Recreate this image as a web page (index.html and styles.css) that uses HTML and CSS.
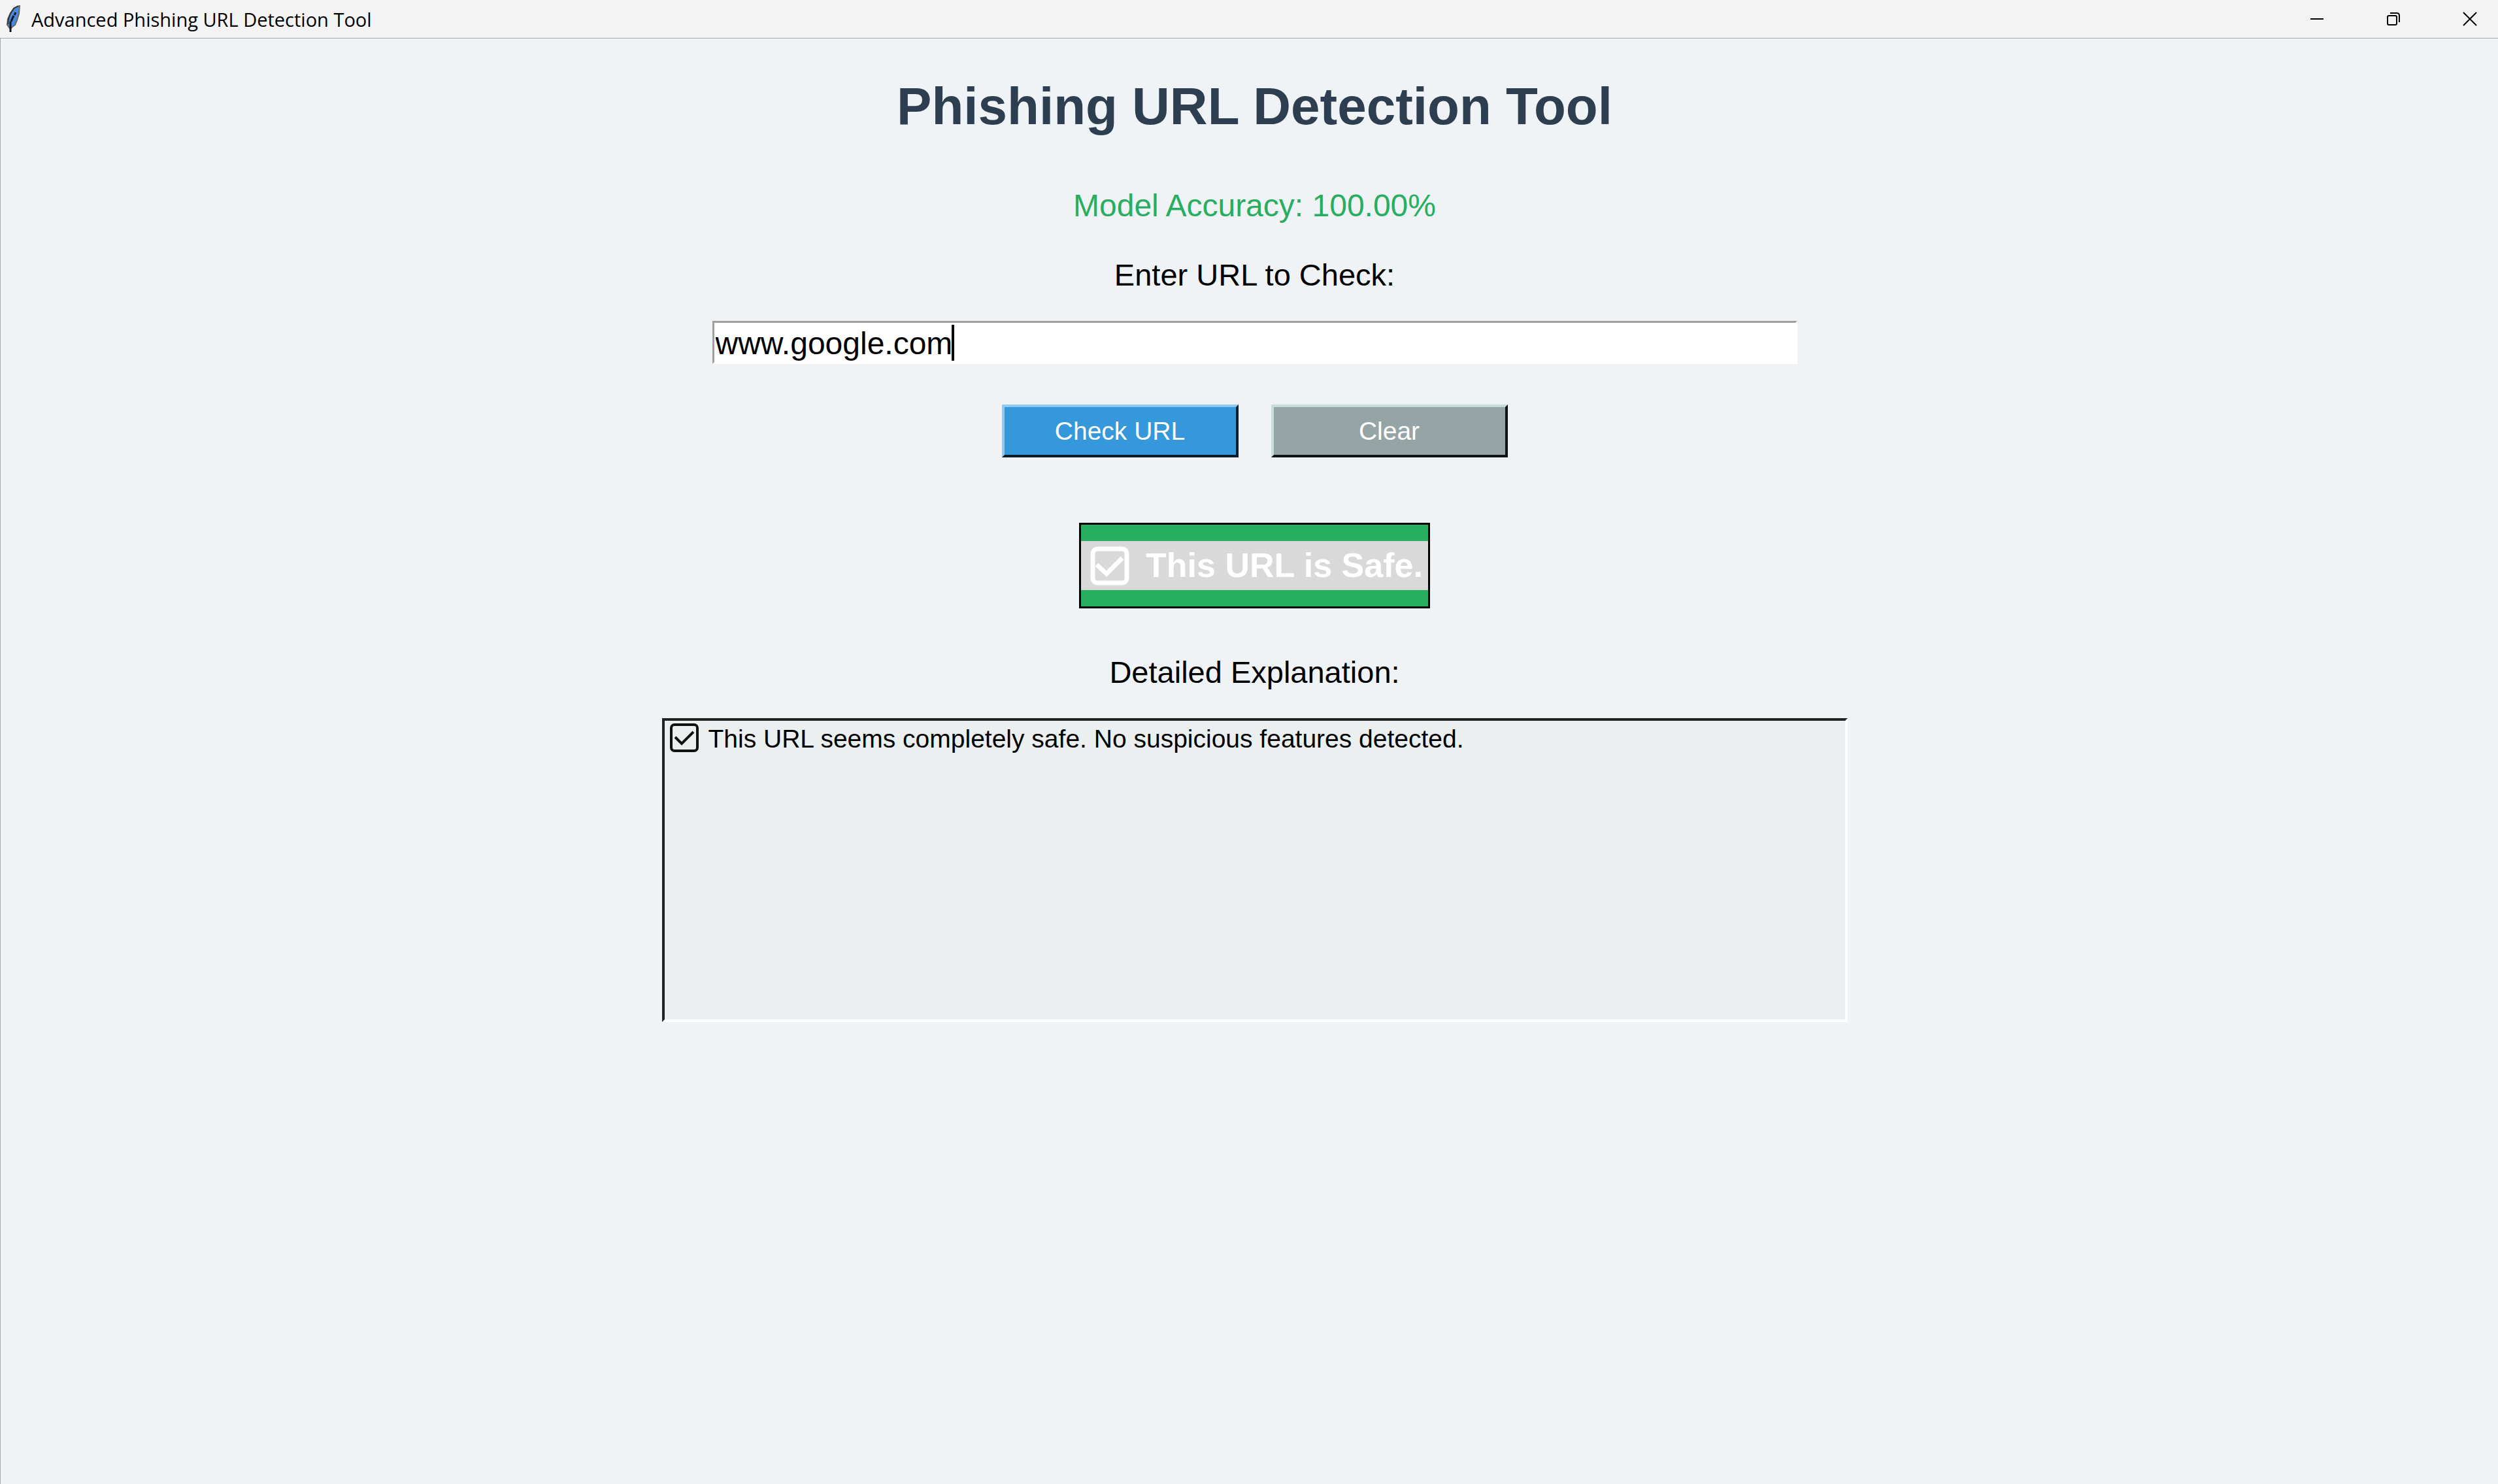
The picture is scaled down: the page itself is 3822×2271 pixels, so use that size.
FILE: index.html
```html
<!DOCTYPE html>
<html lang="en">
<head>
<meta charset="utf-8">
<title>Advanced Phishing URL Detection Tool</title>
<link rel="stylesheet" href="styles.css">
</head>
<body>
<header class="titlebar">
  <svg class="feather" viewBox="0 0 24 42" aria-hidden="true">
    <path d="M21 1 L13 4 L7 12 L3 21 L2 30 L5 34 L7 36 L10 33 L14 30 L17 23 L20 13 Z" fill="#4a8ade" stroke="#666" stroke-width="2"/>
    <path d="M19 1 L12 5 L7 13 L4 21 L3 29" fill="none" stroke="#333" stroke-width="2"/>
    <path d="M15 11L13 15M12 16L10 20M10 20L8 25" fill="none" stroke="#10161f" stroke-width="3"/>
    <path d="M7 25V41" fill="none" stroke="#10161f" stroke-width="3"/>
  </svg>
  <span class="caption">Advanced Phishing URL Detection Tool</span>
  <div class="window-controls">
    <button class="window-button" aria-label="Minimize"><svg viewBox="0 0 20 20"><path d="M0 10H20"/></svg></button>
    <button class="window-button" aria-label="Restore"><svg viewBox="0 0 20 20"><rect x="1" y="5" width="14" height="14" rx="2"/><path d="M5 1H15Q19 1 19 5V15"/></svg></button>
    <button class="window-button" aria-label="Close"><svg viewBox="0 0 20 20"><path d="M0 0L20 20M20 0L0 20"/></svg></button>
  </div>
</header>
<main class="content">
  <h1 class="title">Phishing URL Detection Tool</h1>
  <p class="accuracy">Model Accuracy: 100.00%</p>
  <label class="label" for="url">Enter URL to Check:</label>
  <div class="field">
    <input class="entry" id="url" type="text" value="www.google.com" spellcheck="false">
    <span class="caret"></span>
  </div>
  <div class="actions">
    <button class="button check">Check URL</button>
    <button class="button clear">Clear</button>
  </div>
  <div class="result" role="status">
    <div class="verdict">
      <svg class="tick-large" viewBox="0 0 60 60" aria-hidden="true"><rect x="4" y="4" width="52" height="52" rx="7"/><path d="M10 28L25 42L49 18"/></svg>
      <span>This URL is Safe.</span>
    </div>
  </div>
  <h2 class="label">Detailed Explanation:</h2>
  <section class="details">
    <svg class="tick-small" viewBox="0 0 44 44" aria-hidden="true"><rect x="2" y="2" width="40" height="40" rx="5"/><path d="M8 21L18 31L36 13"/></svg>
    <span>This URL seems completely safe. No suspicious features detected.</span>
  </section>
</main>
</body>
</html>
```
FILE: styles.css
```css
* {
  box-sizing: border-box;
}

body {
  margin: 0;
  min-height: 100vh;
  display: flex;
  flex-direction: column;
  background: #eff3f6;
  color: #000;
  font-family: "Liberation Sans", Arial, sans-serif;
}

.titlebar {
  display: flex;
  align-items: center;
  height: 59px;
  padding-left: 9px;
  background: #f3f3f3;
  border-bottom: 1px solid #a5a7a8;
}

.feather {
  width: 24px;
  height: 42px;
}

.caption {
  margin-left: 15px;
  padding-top: 2px;
  font: 29px/40px "Open Sans", "Noto Sans", sans-serif;
}

.window-controls {
  display: flex;
  gap: 31px;
  margin-left: auto;
}

.window-button {
  display: flex;
  align-items: center;
  justify-content: center;
  width: 86px;
  height: 58px;
  padding: 0;
  border: 0;
  background: none;
}

.window-button svg {
  width: 20px;
  height: 20px;
  overflow: visible;
  fill: none;
  stroke: #000;
  stroke-width: 2;
}

.content {
  flex: 1;
  display: flex;
  flex-direction: column;
  align-items: center;
  padding: 60px 0 40px 16px;
  border-left: 1px solid #a5a7a8;
}

.title {
  margin: 0;
  font-size: 80px;
  line-height: 88px;
  color: #2c3e50;
}

.accuracy {
  margin: 80px 0 50px;
  font-size: 48px;
  line-height: 56px;
  color: #27ae60;
}

.label {
  margin: 0;
  font-size: 47px;
  font-weight: 400;
  line-height: 56px;
}

.field {
  position: relative;
  width: 1660px;
  max-width: 100%;
  margin-top: 42px;
}

.entry {
  display: block;
  width: 100%;
  height: 66px;
  padding: 2px 2px 0;
  border: 3px solid #fff;
  border-top-color: #a0a0a0;
  border-left-color: #a0a0a0;
  outline: 0;
  background: #fff;
  font: 48px/56px "Liberation Sans", Arial, sans-serif;
}

.caret {
  position: absolute;
  top: 6px;
  left: 366px;
  width: 4px;
  height: 55px;
  background: #000;
}

.actions {
  display: flex;
  gap: 50px;
  margin-top: 62px;
}

.button {
  width: 362px;
  height: 81px;
  padding: 0;
  border: 4px solid;
  color: #fff;
  font: 39px/48px "Liberation Sans", Arial, sans-serif;
}

.check {
  background: #3498db;
  border-color: #8fcaf5 #0b1c28 #0b1c28 #8fcaf5;
}

.clear {
  background: #95a5a6;
  border-color: #c8dcdc #101414 #101414 #c8dcdc;
}

.result {
  margin: 100px 0 70px;
  padding: 25px 0;
  border: 3px solid #000;
  background: #27ae60;
}

.verdict {
  display: flex;
  align-items: center;
  gap: 25px;
  height: 75px;
  padding: 0 8px 0 14px;
  background: #d9d9d9;
  color: #fff;
  font-size: 52px;
  font-weight: 700;
  line-height: 75px;
}

.tick-large {
  width: 60px;
  height: 60px;
  fill: none;
  stroke: #fff;
  stroke-width: 7;
}

.details {
  display: flex;
  align-items: flex-start;
  gap: 15px;
  width: 1814px;
  max-width: 100%;
  height: 465px;
  margin-top: 42px;
  padding: 4px 8px;
  border: 4px solid;
  border-color: #222 #fff #fff #222;
  background: #ebefef;
  font-size: 39px;
  line-height: 48px;
}

.tick-small {
  width: 44px;
  height: 44px;
  fill: none;
  stroke: #111;
  stroke-width: 4;
}
```
